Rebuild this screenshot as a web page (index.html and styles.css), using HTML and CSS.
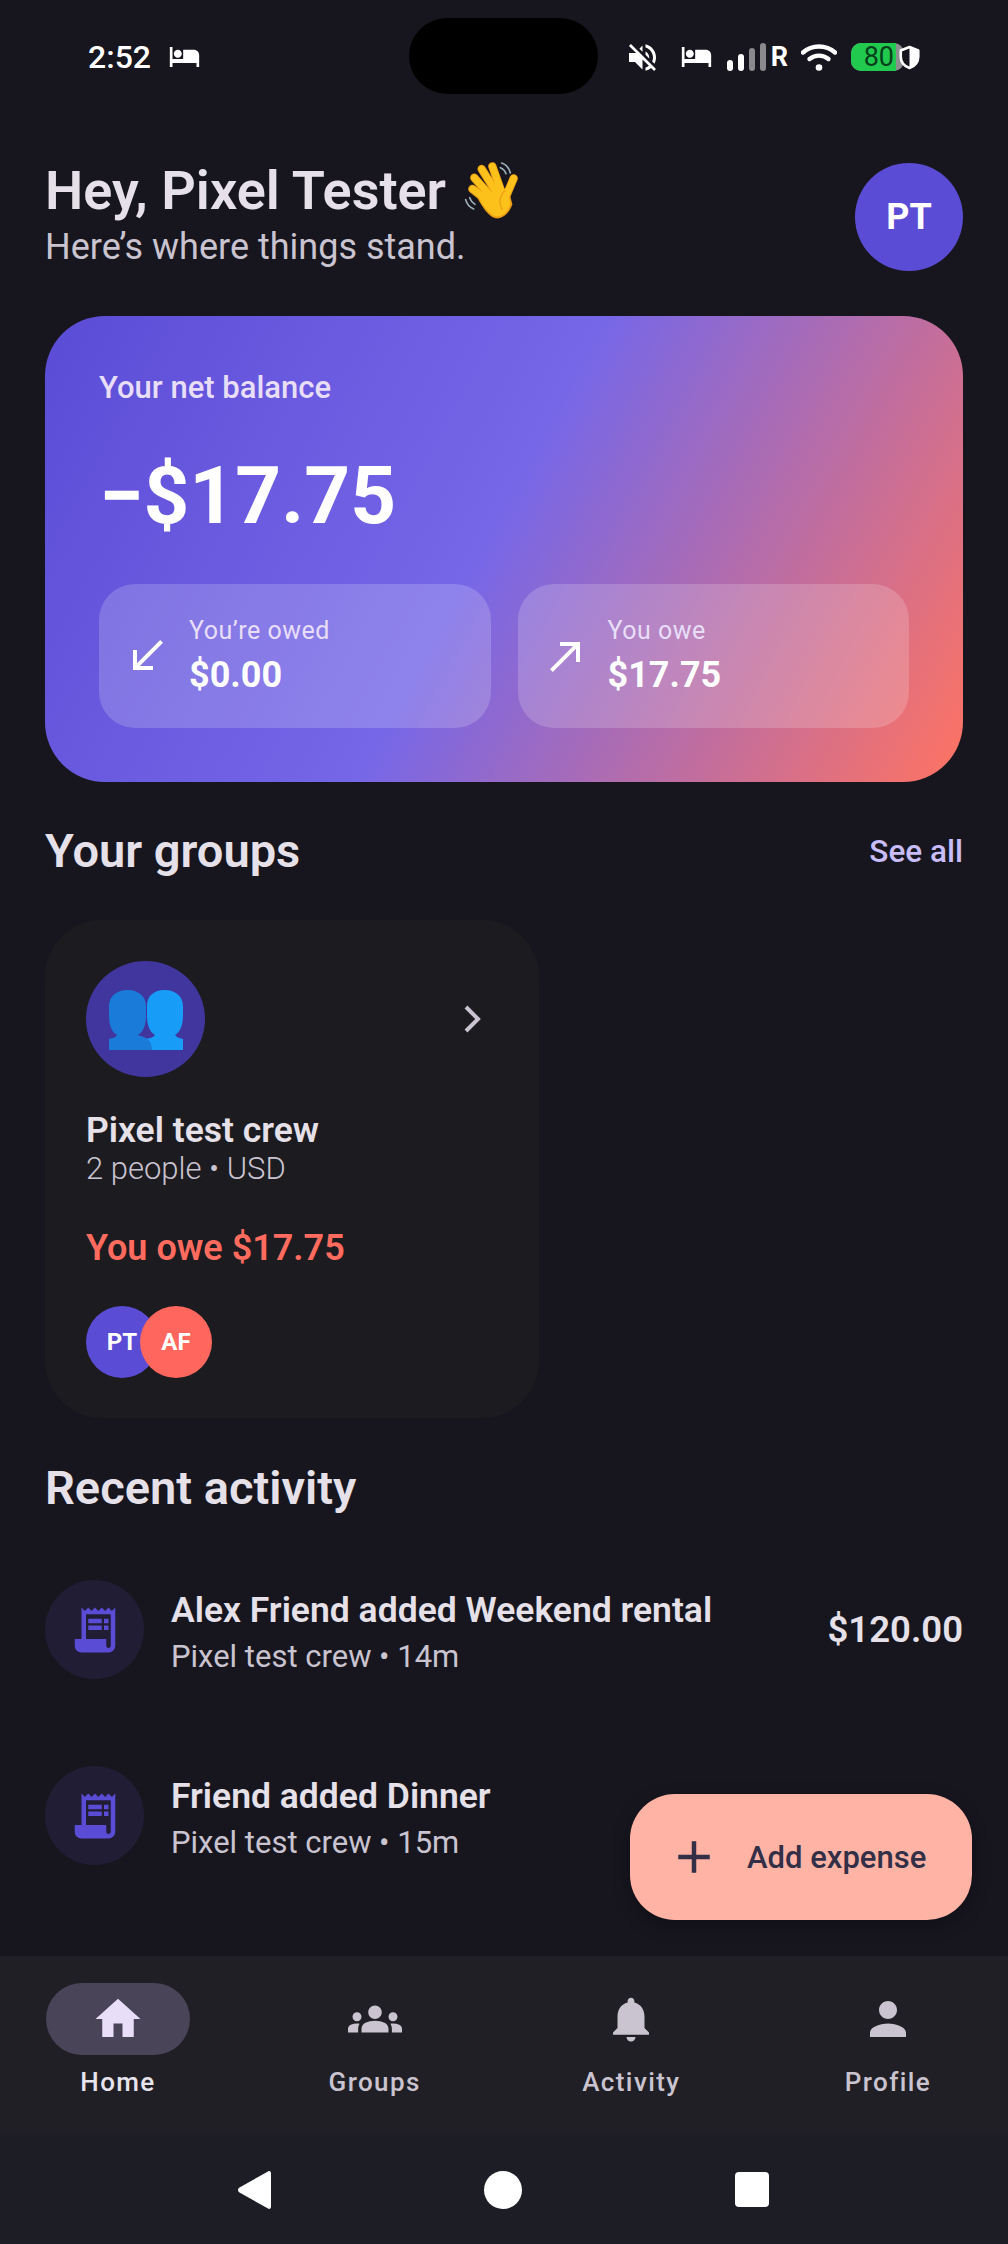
FILE: index.html
```html
<!DOCTYPE html>
<html lang="en">
<head>
<meta charset="utf-8">
<title>Home</title>
<link rel="stylesheet" href="styles.css">
</head>
<body>
<div class="screen">
  <header class="statusbar">
    <div class="status-left">
      <span class="clock">2:52</span>
      <svg class="st-bed" viewBox="1 5 22 15"><path fill="#fff" d="M7 13c1.66 0 3-1.34 3-3S8.66 7 7 7s-3 1.34-3 3 1.34 3 3 3zm12-6h-8v7H3V5H1v15h2v-3h18v3h2v-9c0-2.21-1.79-4-4-4z"/></svg>
    </div>
    <div class="camera"></div>
    <div class="status-right">
      <svg class="st-mute" viewBox="3 3 18 18"><path fill="#fff" d="M16.5 12c0-1.77-1.02-3.29-2.5-4.03v2.21l2.45 2.45c.03-.2.05-.41.05-.63zm2.5 0c0 .94-.2 1.82-.54 2.64l1.51 1.51C20.63 14.91 21 13.5 21 12c0-4.28-2.99-7.86-7-8.77v2.06c2.89.86 5 3.54 5 6.71zM4.27 3 3 4.27 7.73 9H3v6h4l5 5v-6.73l4.25 4.25c-.67.52-1.42.93-2.25 1.18v2.06c1.38-.31 2.63-.95 3.69-1.81L19.73 21 21 19.73l-9-9L4.27 3zM12 4 9.91 6.09 12 8.18V4z"/></svg>
      <svg class="st-bed2" viewBox="1 5 22 15"><path fill="#fff" d="M7 13c1.66 0 3-1.34 3-3S8.66 7 7 7s-3 1.34-3 3 1.34 3 3 3zm12-6h-8v7H3V5H1v15h2v-3h18v3h2v-9c0-2.21-1.79-4-4-4z"/></svg>
      <svg class="st-signal" viewBox="0 0 40 28">
        <rect x="0" y="17" width="6" height="11" rx="3" fill="#fff"/>
        <rect x="11" y="11" width="6" height="17" rx="3" fill="#fff"/>
        <rect x="22" y="5" width="6" height="23" rx="3" fill="#8a8a8e"/>
        <rect x="33" y="0" width="6" height="28" rx="3" fill="#8a8a8e"/>
      </svg>
      <span class="st-r">R</span>
      <svg class="st-wifi" viewBox="0 0 36 28">
        <path d="M2 9.5C11 1.5 25 1.5 34 9.5" fill="none" stroke="#fff" stroke-width="4.4" stroke-linecap="round"/>
        <path d="M8.5 16C14 11.5 22 11.5 27.5 16" fill="none" stroke="#fff" stroke-width="4.4" stroke-linecap="round"/>
        <circle cx="18" cy="24.5" r="3.3" fill="#fff"/>
      </svg>
      <div class="battery"><span class="battery-fill">80</span></div>
      <svg class="st-shield" viewBox="-2 -2 24 28"><path fill="#17161f" stroke="#fff" stroke-width="3" stroke-linejoin="round" d="M10 0 20 4v7c0 6-4.200 10.800-10 13C4.200 21.800 0 17 0 11V4z"/><path fill="#fff" d="M10 0 20 4v7c0 6-4.200 10.800-10 13z"/></svg>
    </div>
  </header>

  <main class="content">
    <section class="greeting">
      <div>
        <h1 class="greeting-title">Hey, Pixel Tester
          <svg class="wave" viewBox="0 0 240 240">
            <g fill="none" stroke="#9fb0ba" stroke-width="5" stroke-linecap="round">
              <path d="M158 36c12 4 22 14 26 30"/><path d="M154 50c8 3 14 9 17 18"/>
              <path d="M50 146c3 12 10 22 24 28"/><path d="M62 140c3 9 8 15 16 20"/>
            </g>
            <g fill="none" stroke="#ec9d14" stroke-linecap="round">
              <path stroke-width="25" d="M70 114 118 152M76 80 128 140M98 54 142 125M130 46 158 125M194 82 168 144"/>
            </g>
            <path fill="#ec9d14" d="M108 132 178 112 190 160C180 190 160 204 140 202 120 198 100 170 86 142z"/>
            <g fill="none" stroke="#fcc21b" stroke-linecap="round">
              <path stroke-width="20" d="M71 114 118 150M76 80 128 138M98 54 142 123M130 46 158 123M194 82 168 142"/>
            </g>
            <path fill="#fcc21b" d="M108 130 176 112 184 158C176 186 158 198 140 196 122 192 102 166 90 142z"/>
            <path fill="none" stroke="#ec9d14" stroke-width="3.500" stroke-linecap="round" d="M168 118C152 134 148 156 160 176"/>
          </svg>
        </h1>
        <p class="greeting-sub">Here’s where things stand.</p>
      </div>
      <div class="avatar-lg">PT</div>
    </section>

    <section class="balance">
      <p class="balance-label">Your net balance</p>
      <p class="balance-amount">−$17.75</p>
      <div class="balance-row">
        <div class="stat">
          <svg class="stat-icon" viewBox="0 0 24 24"><path fill="#fff" d="M20 5.410 18.590 4 7 15.590V9H5v10h10v-2H8.410z"/></svg>
          <div>
            <div class="stat-label">You’re owed</div>
            <div class="stat-value">$0.00</div>
          </div>
        </div>
        <div class="stat">
          <svg class="stat-icon" viewBox="0 0 24 24"><path fill="#fff" d="M9 5v2h6.590L4 18.590 5.410 20 17 8.410V15h2V5z"/></svg>
          <div>
            <div class="stat-label">You owe</div>
            <div class="stat-value">$17.75</div>
          </div>
        </div>
      </div>
    </section>

    <section class="section-head">
      <h2 class="section-title">Your groups</h2>
      <span class="see-all">See all</span>
    </section>

    <article class="group-card">
      <div class="group-top">
        <div class="group-icon">
          <svg viewBox="0 0 74 60">
            <path fill="#179cf7" d="M37 60V49c5-1 8-2 9-4-5-3-8-9-8-20V16C38 6 45 0 55.500 0S74 6 74 16v9c0 11-3 17-8 20 1 2 4 3 8 4v11z"/>
            <path fill="#1a7bd8" d="M0 60V49c5-1 7-2 8-4-5-3-8-9-8-20V16C0 6 8 0 18.500 0S37 6 37 16v9c0 11-3 17-8 20 3 2 14 1 14 15z"/>
          </svg>
        </div>
        <svg class="chevron" viewBox="0 0 24 24"><path fill="#cac4d0" d="M9.290 6.710 10.700 5.290 17.410 12l-6.710 6.710-1.410-1.420L14.590 12z"/></svg>
      </div>
      <h3 class="group-name">Pixel test crew</h3>
      <p class="group-meta">2 people • USD</p>
      <p class="group-owe">You owe $17.75</p>
      <div class="members">
        <span class="member member-pt">PT</span>
        <span class="member member-af">AF</span>
      </div>
    </article>

    <h2 class="section-title recent-title">Recent activity</h2>

    <div class="activity">
      <div class="activity-icon">
        <svg viewBox="0 0 24 24"><use href="#receipt"/></svg>
      </div>
      <div class="activity-text">
        <div class="activity-title">Alex Friend added Weekend rental</div>
        <div class="activity-sub">Pixel test crew • 14m</div>
      </div>
      <div class="activity-amount">$120.00</div>
    </div>
    <div class="activity">
      <div class="activity-icon">
        <svg viewBox="0 0 24 24"><use href="#receipt"/></svg>
      </div>
      <div class="activity-text">
        <div class="activity-title">Friend added Dinner</div>
        <div class="activity-sub">Pixel test crew • 15m</div>
      </div>
    </div>

    <button class="fab">
      <svg viewBox="0 0 24 24"><path fill="#322f47" d="M19 13h-6v6h-2v-6H5v-2h6V5h2v6h6z"/></svg>
      <span>Add expense</span>
    </button>
  </main>

  <nav class="tabbar">
    <div class="tab tab-active">
      <div class="tab-pill"><svg viewBox="0 0 24 24"><path d="M10 20v-6h4v6h5v-8h3L12 3 2 12h3v8z"/></svg></div>
      <span>Home</span>
    </div>
    <div class="tab">
      <div class="tab-pill"><svg viewBox="0 0 24 24"><path d="M12 12.750c1.630 0 3.070.390 4.240.900 1.080.480 1.760 1.560 1.760 2.730V18H6v-1.610c0-1.180.680-2.260 1.760-2.730 1.170-.520 2.610-.910 4.240-.910zM4 13c1.100 0 2-.900 2-2s-.900-2-2-2-2 .900-2 2 .900 2 2 2zm1.130 1.100c-.370-.060-.740-.100-1.130-.100-.990 0-1.930.210-2.780.580C.480 14.900 0 15.620 0 16.430V18h4.500v-1.610c0-.830.230-1.610.630-2.290zM20 13c1.100 0 2-.900 2-2s-.900-2-2-2-2 .900-2 2 .900 2 2 2zm4 3.430c0-.810-.480-1.530-1.220-1.850-.850-.370-1.790-.580-2.780-.580-.390 0-.760.040-1.130.100.400.680.630 1.460.630 2.290V18H24v-1.570zM12 6c1.660 0 3 1.340 3 3s-1.340 3-3 3-3-1.340-3-3 1.340-3 3-3z"/></svg></div>
      <span>Groups</span>
    </div>
    <div class="tab">
      <div class="tab-pill"><svg viewBox="0 0 24 24"><path d="M12 22c1.100 0 2-.900 2-2h-4c0 1.100.890 2 2 2zm6-6v-5c0-3.070-1.640-5.640-4.500-6.320V4c0-.830-.670-1.500-1.500-1.500s-1.500.670-1.500 1.500v.680C7.630 5.360 6 7.920 6 11v5l-2 2v1h16v-1l-2-2z"/></svg></div>
      <span>Activity</span>
    </div>
    <div class="tab">
      <div class="tab-pill"><svg viewBox="0 0 24 24"><path d="M12 12c2.210 0 4-1.790 4-4s-1.790-4-4-4-4 1.790-4 4 1.790 4 4 4zm0 2c-2.670 0-8 1.340-8 4v2h16v-2c0-2.660-5.330-4-8-4z"/></svg></div>
      <span>Profile</span>
    </div>
  </nav>

  <footer class="sysnav">
    <svg class="sys-back" viewBox="0 0 33 38"><path fill="#fff" d="M30 .500c1.700-1 3 0 3 2v33c0 2-1.300 3-3 2L1.500 21.500c-2-1.300-2-3.700 0-5z"/></svg>
    <span class="sys-home"></span>
    <span class="sys-recent"></span>
  </footer>
</div>

<svg class="defs" width="0" height="0" aria-hidden="true">
  <symbol id="receipt" viewBox="0 0 24 24">
    <path fill="#5b4cd6" d="M19.500 3.500 18 2l-1.500 1.500L15 2l-1.500 1.500L12 2l-1.500 1.500L9 2 7.500 3.500 6 2v14H3v3c0 1.660 1.340 3 3 3h12c1.660 0 3-1.340 3-3V2l-1.500 1.500zM19 19c0 .550-.450 1-1 1s-1-.450-1-1v-3H8V5h11v14zM9 7h6v2H9zM16 7h2v2h-2zM9 10h6v2H9zM16 10h2v2h-2z"/>
  </symbol>
</svg>
</body>
</html>
```

FILE: styles.css
```css
* { box-sizing: border-box; }

html, body {
  margin: 0;
  padding: 0;
  background: #17161f;
}

body {
  font-family: Roboto, "Noto Sans", sans-serif;
  color: #e6e1e9;
}

h1, h2, h3, p { margin: 0; }

.screen {
  width: 1008px;
  height: 2244px;
  display: flex;
  flex-direction: column;
  overflow: hidden;
  background: #17161f;
}

.defs { position: absolute; }

/* status bar */
.statusbar {
  position: relative;
  flex: none;
  height: 100px;
  display: flex;
  justify-content: space-between;
  align-items: center;
  padding: 14px 88px 0 88px;
  color: #fff;
}
.status-left { display: flex; align-items: center; gap: 18px; }
.clock { font-size: 32px; font-weight: 500; line-height: 36px; }
.st-bed { width: 31px; height: 20px; }
.camera {
  position: absolute;
  left: 409px;
  top: 18px;
  width: 189px;
  height: 76px;
  border-radius: 38px;
  background: #000;
}
.status-right { display: flex; align-items: center; }
.st-mute { width: 27px; height: 27px; margin-right: 25px; }
.st-bed2 { width: 31px; height: 20px; margin-right: 15px; }
.st-signal { width: 40px; height: 28px; margin-right: 4px; }
.st-r { font-size: 27px; font-weight: 700; line-height: 28px; margin-right: 13px; }
.st-wifi { width: 36px; height: 28px; margin-right: 14px; }
.battery {
  width: 53px;
  height: 28px;
  border-radius: 10px;
  background: #8d8d90;
}
.battery-fill {
  display: block;
  width: 45px;
  height: 28px;
  padding-right: 2px;
  border-radius: 10px 0 0 10px;
  background: #22c94f;
  color: #06401a;
  font-size: 27px;
  font-weight: 400;
  line-height: 28px;
  text-align: right;
}
.st-shield { position: relative; width: 21px; height: 25px; margin-left: -5px; }

/* main scroll area */
.content {
  position: relative;
  flex: 1;
  min-height: 0;
  padding: 0 45px;
}

.greeting {
  display: flex;
  justify-content: space-between;
  align-items: flex-start;
  padding-top: 60px;
  height: 216px;
}
.greeting-title {
  font-size: 54px;
  font-weight: 600;
  line-height: 62px;
  display: flex;
  align-items: center;
  gap: 3px;
  white-space: nowrap;
}
.wave { width: 80px; height: 80px; margin: -12px 0; }
.greeting-sub {
  font-size: 36px;
  font-weight: 400;
  line-height: 42px;
  margin-top: 4px;
  color: #cac4d0;
}
.avatar-lg {
  width: 108px;
  height: 108px;
  margin-top: 3px;
  border-radius: 50%;
  background: #5b4cd6;
  color: #fff;
  font-size: 36px;
  font-weight: 700;
  display: flex;
  align-items: center;
  justify-content: center;
}

/* balance card */
.balance {
  height: 466px;
  border-radius: 60px;
  padding: 55px 54px 54px;
  background: linear-gradient(118deg, #5b4cd6 0%, #7667e8 48%, #ff7361 100%);
  color: #fff;
}
.balance-label {
  font-size: 31px;
  font-weight: 500;
  line-height: 34px;
  color: #e8def8;
}
.balance-amount {
  font-size: 80px;
  font-weight: 700;
  line-height: 94px;
  margin-top: 44px;
}
.balance-row {
  display: grid;
  grid-template-columns: 1fr 1fr;
  gap: 27px;
  margin-top: 41px;
}
.stat {
  height: 144px;
  border-radius: 36px;
  background: rgba(255, 255, 255, 0.18);
  display: flex;
  align-items: center;
  gap: 18px;
  padding: 0 24px;
}
.stat-icon { width: 48px; height: 48px; flex: none; }
.stat-label {
  font-size: 25px;
  line-height: 30px;
  color: #e8def8;
  letter-spacing: 0.5px;
}
.stat-value {
  font-size: 36px;
  font-weight: 700;
  line-height: 44px;
  margin-top: 7px;
}

/* section headings */
.section-head {
  display: flex;
  justify-content: space-between;
  align-items: center;
  margin-top: 43px;
  height: 52px;
}
.section-title {
  font-size: 47px;
  font-weight: 600;
  line-height: 52px;
}
.see-all {
  font-size: 31.500px;
  font-weight: 500;
  color: #c8bdf8;
}

/* group card */
.group-card {
  width: 494px;
  height: 498px;
  margin-top: 43px;
  padding: 41px 41px 0;
  border-radius: 57px;
  background: #1c1b20;
}
.group-top {
  display: flex;
  justify-content: space-between;
  align-items: center;
}
.group-icon {
  width: 119px;
  height: 116px;
  border-radius: 50%;
  background: #41369e;
  display: flex;
  align-items: center;
  justify-content: center;
}
.group-icon svg { width: 74px; height: 60px; margin-top: 2px; }
.chevron { width: 48px; height: 48px; margin-right: 4px; }
.group-name {
  font-size: 35.500px;
  font-weight: 600;
  line-height: 40px;
  margin-top: 33px;
}
.group-meta {
  font-size: 31px;
  font-weight: 300;
  line-height: 38px;
  color: #cac4d0;
}
.group-owe {
  font-size: 36px;
  font-weight: 600;
  line-height: 40px;
  color: #ff6b5e;
  margin-top: 40px;
}
.members { display: flex; margin-top: 38px; }
.member {
  width: 72px;
  height: 72px;
  border-radius: 50%;
  color: #fff;
  font-size: 24px;
  font-weight: 700;
  display: flex;
  align-items: center;
  justify-content: center;
}
.member-pt { background: #5b4cd6; }
.member-af { background: #ff675e; margin-left: -18px; }

/* recent activity */
.recent-title { margin-top: 44px; }
.activity {
  display: flex;
  align-items: center;
  gap: 27px;
  height: 99px;
  margin-top: 38px;
}
.recent-title + .activity { margin-top: 66px; }
.activity + .activity { margin-top: 87px; }
.activity-icon {
  width: 99px;
  height: 99px;
  border-radius: 50%;
  background: #211d35;
  display: flex;
  align-items: center;
  justify-content: center;
  flex: none;
}
.activity-icon svg { width: 54px; height: 54px; }
.activity-text { flex: 1; min-width: 0; padding-top: 6px; }
.activity-title {
  font-size: 35.500px;
  font-weight: 600;
  line-height: 42px;
  white-space: nowrap;
}
.activity-sub {
  font-size: 31px;
  font-weight: 400;
  line-height: 40px;
  margin-top: 6px;
  color: #cac4d0;
}
.activity-amount { font-size: 36.500px; font-weight: 600; }

/* floating action */
.fab {
  position: absolute;
  left: 630px;
  top: 1694px;
  width: 342px;
  height: 126px;
  border: 0;
  border-radius: 45px;
  background: #ffb3a5;
  color: #322f47;
  font-family: inherit;
  font-size: 31px;
  font-weight: 500;
  display: flex;
  align-items: center;
  gap: 26px;
  padding: 0 0 0 37px;
  box-shadow: 0 6px 18px rgba(0, 0, 0, 0.3);
}
.fab svg { width: 54px; height: 54px; }

/* bottom tabs */
.tabbar {
  flex: none;
  height: 179px;
  background: #211f26;
  display: flex;
  justify-content: space-between;
  padding: 27px 48px 0 46px;
}
.tab {
  width: 144px;
  display: flex;
  flex-direction: column;
  align-items: center;
  color: #cac4d0;
  font-size: 26px;
  font-weight: 500;
  letter-spacing: 1.400px;
  line-height: 34px;
  gap: 10px;
}
.tab-pill {
  width: 144px;
  height: 72px;
  border-radius: 36px;
  display: flex;
  align-items: center;
  justify-content: center;
}
.tab-pill svg { width: 54px; height: 54px; fill: #cac4d0; }
.tab-active { color: #e8e4ee; }
.tab-active .tab-pill { background: #4a4458; }
.tab-active .tab-pill svg { fill: #e8def8; }

/* system navigation */
.sysnav {
  flex: none;
  height: 109px;
  background: #1d1e25;
  display: flex;
  align-items: center;
  padding: 0 239px 0 238px;
  justify-content: space-between;
}
.sys-back { width: 33px; height: 38px; }
.sys-home { width: 38px; height: 38px; border-radius: 50%; background: #fff; }
.sys-recent { width: 34px; height: 35px; border-radius: 4px; background: #fff; }
```
